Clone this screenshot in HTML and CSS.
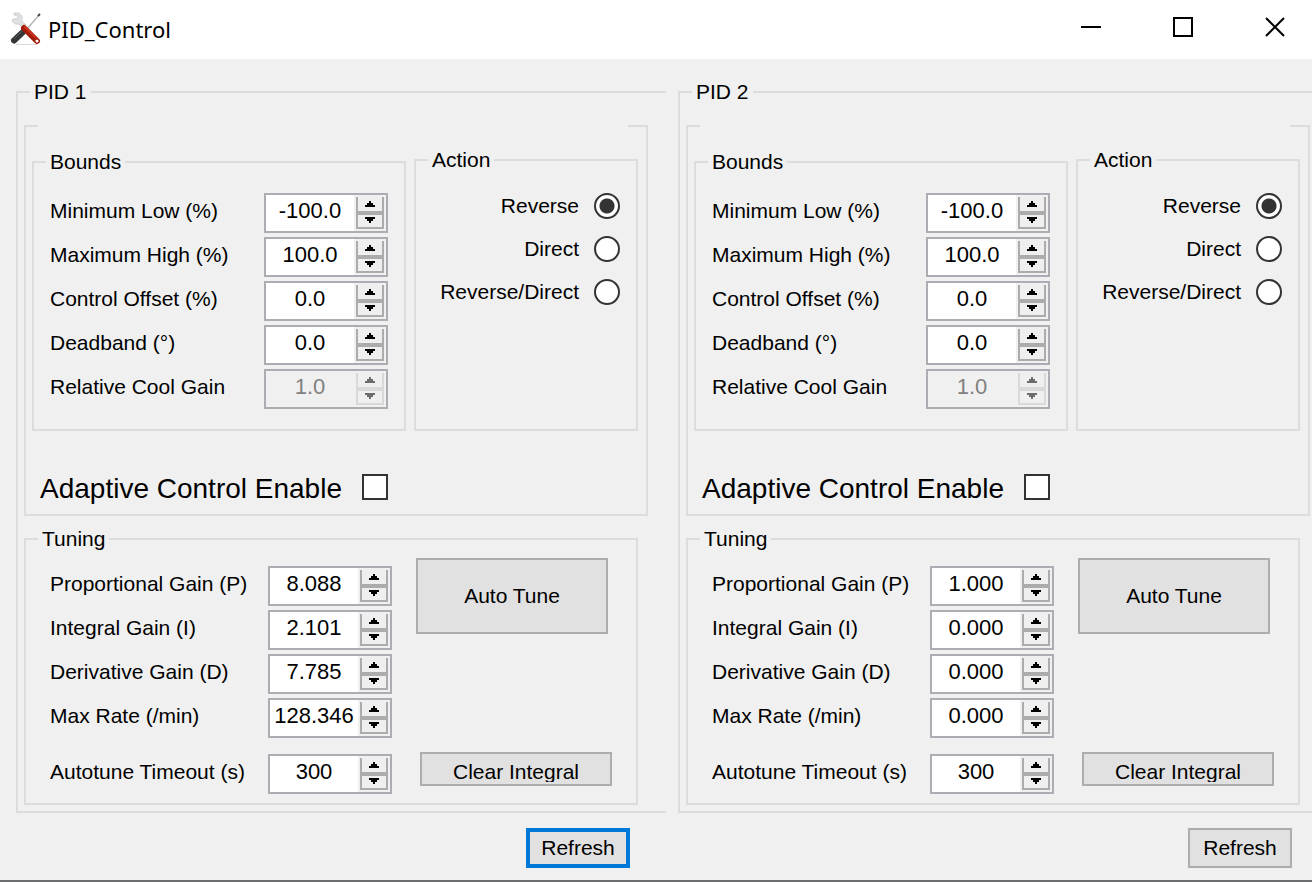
FILE: index.html
```html
<!DOCTYPE html>
<html lang="en">
<head>
<meta charset="utf-8">
<title>PID_Control</title>
<link rel="stylesheet" href="styles.css">
</head>
<body>
<header class="titlebar">
  <svg class="app-icon" viewBox="0 0 32 34" aria-hidden="true">
    <path d="M6 32.500H27" stroke="#d9d9d9" stroke-width="1"/>
    <path d="M29 3L17 17" stroke="#b4b8ba" stroke-width="1.500"/>
    <path d="M30 2L28 4" stroke="#444" stroke-width="2"/>
    <path d="M13.500 19.500L4 28.500" stroke="#34373a" stroke-width="6" stroke-linecap="round"/>
    <path d="M12 19L4 27" stroke="#5a5d60" stroke-width="1"/>
    <path d="M4 1H9L12 4V9L16 13L13 16L9 12L5 12L2 9L3 7L7 7L8 4L4 3Z" fill="#dfe1e2" stroke="#cfd1d2" stroke-width="1"/>
    <path d="M14 16L27 29" stroke="#a31c0a" stroke-width="6" stroke-linecap="round"/>
    <path d="M14 14L26 26" stroke="#c9321a" stroke-width="2"/>
    <circle cx="27" cy="29" r="1.500" fill="#fff"/>
  </svg>
  <h1 class="title">PID_Control</h1>
  <div class="window-controls">
    <button class="window-button" type="button" aria-label="Minimize"><svg viewBox="0 0 20 20"><path d="M0 10H20"/></svg></button>
    <button class="window-button" type="button" aria-label="Maximize"><svg viewBox="0 0 20 20"><path d="M1 1H19V19H1Z"/></svg></button>
    <button class="window-button" type="button" aria-label="Close"><svg viewBox="0 0 20 20"><path d="M1 1L19 19M19 1L1 19"/></svg></button>
  </div>
</header>
<main class="panels" id="panels"></main>
<script src="panels.js"></script>
</body>
</html>
```
FILE: styles.css
```css
* { box-sizing: border-box; }

body {
  margin: 0;
  min-height: 100vh;
  background: #f0f0f0;
  border-bottom: 2px solid #6b6d70;
  color: #000;
  font-family: "Liberation Sans", Arial, sans-serif;
  font-size: 21px;
  line-height: 28px;
  overflow-x: hidden;
}

button, input { font: inherit; color: inherit; margin: 0; }

.titlebar {
  display: flex;
  align-items: center;
  height: 59px;
  padding: 0 1px 2px 10px;
  background: #fff;
}
.app-icon { width: 32px; height: 34px; }
.title {
  margin: 0 0 0 6px;
  font: 400 22px/28px "Noto Sans", "Open Sans", sans-serif;
}
.window-controls {
  display: flex;
  gap: 20px;
  height: 54px;
  margin-left: auto;
  align-self: flex-start;
}
.window-button {
  width: 72px;
  padding: 0;
  border: 0;
  background: none;
}
.window-button svg {
  display: block;
  width: 20px;
  height: 20px;
  margin: 0 auto;
  fill: none;
  stroke: #000;
  stroke-width: 2;
}

.panels {
  display: grid;
  grid-template-columns: minmax(0, 650fr) minmax(0, 634fr);
  gap: 12px;
  padding: 19px 0 12px 16px;
}
.panel { --edge: 18px; }
.panel:last-child { --edge: 2px; }

.group {
  min-width: 0;
  margin: 0;
  padding: 0;
  border: 2px solid #dcdcdc;
}
.group > legend {
  margin-left: 12px;
  padding: 0 4px;
}
.group-panel {
  padding: 0 var(--edge) 6px 6px;
  border-right: 0;
}
.group-panel > legend { margin-left: 6px; }
.group-control {
  margin-top: 19px;
  padding: 0 8px 14px 6px;
}
.group-control > .blank-legend {
  width: calc(100% - 16px);
  height: 2px;
  margin-left: 6px;
}
.control-columns {
  display: flex;
  gap: 8px;
  padding-top: 19px;
}
.group-bounds {
  flex: 1;
  margin-top: 2px;
  padding: 17px 16px 20px;
}
.group-bounds > legend { margin-left: -4px; }
.group-action {
  width: 224px;
  padding-right: 16px;
}
.group-tuning {
  margin: 9px 10px 0 0;
}

.fields {
  display: flex;
  flex-direction: column;
  gap: 4px;
}
.field {
  display: flex;
  justify-content: space-between;
}
.field > label { line-height: 36px; white-space: nowrap; }
.field-timeout { margin-top: 12px; }

.spinner {
  display: flex;
  flex: none;
  width: 124px;
  height: 40px;
  border: 2px solid #abadb3;
  background: #f0f0f0;
}
.spinner-input {
  width: 88px;
  min-width: 0;
  padding: 0 0 4px;
  border: 0;
  outline: 0;
  background: #fff;
  font-size: 22px;
  text-align: center;
}
.spinner-buttons {
  display: flex;
  flex-direction: column;
  width: 32px;
  padding: 2px;
}
.spin {
  display: flex;
  justify-content: center;
  align-items: flex-start;
  height: 16px;
  padding: 4px 0 0;
  border: 2px solid #acacac;
  border-top: 0;
  background: #efefef;
}
.spin-down { padding-top: 2px; border-top: 2px solid #acacac; }
.spin svg { flex: none; width: 10px; height: 6px; }
.spinner-disabled .spinner-input { background: #f0f0f0; color: #808080; }
.spinner-disabled .spin { border-color: #d9d9d9; color: #6d6d6d; }

.options {
  display: flex;
  flex-direction: column;
  align-items: flex-end;
  gap: 17px;
  padding-top: 19px;
}
.option {
  display: flex;
  align-items: center;
  gap: 15px;
  height: 26px;
  white-space: nowrap;
}
.radio, .checkbox {
  appearance: none;
  width: 26px;
  height: 26px;
  border: 2px solid #333;
  background: #fff;
}
.radio { border-radius: 50%; }
.radio:checked { background: radial-gradient(circle, #333 0 7px, #fff 8px); }

.adaptive {
  display: flex;
  align-items: center;
  gap: 20px;
  height: 26px;
  margin-top: 43px;
  padding-left: 8px;
  font-size: 28px;
}
.adaptive > span { padding-top: 4px; }

.tuning-columns {
  display: flex;
  gap: 24px;
  padding-right: 24px;
}
.tuning-columns > .fields {
  flex: 1;
  padding: 13px 0 9px 24px;
}
.tuning-actions {
  display: flex;
  flex-direction: column;
  justify-content: space-between;
  width: 196px;
  padding: 5px 0 17px;
}
.button {
  padding: 0;
  border: 2px solid #adadad;
  background: #e1e1e1;
}
.button-tune { width: 192px; height: 76px; }
.button-clear {
  align-self: flex-end;
  width: 192px;
  height: 34px;
}
.button-clear span {
  display: block;
  height: 26px;
  padding-top: 2px;
  overflow: hidden;
}
.panel-footer {
  display: flex;
  justify-content: flex-end;
  padding: 15px calc(var(--edge) + 18px) 0 0;
}
.button-refresh { width: 104px; height: 40px; }
.button-default { border: 4px solid #0078d7; }
```
FILE: panels.js
```js
const arrowUp = '<svg viewBox="0 0 10 6"><path fill="currentColor" d="M4 0H6V2H8V4H10V6H0V4H2V2H4Z"/></svg>';
const arrowDown = '<svg viewBox="0 0 10 6"><path fill="currentColor" d="M0 0H10V2H8V4H6V6H4V4H2V2H0Z"/></svg>';

function field(panel, key, label, value, options = {}) {
  const id = `pid${panel}-${key}`;
  const disabled = options.disabled ? "disabled" : "";
  return `<div class="field ${options.className || ""}">
    <label for="${id}">${label}</label>
    <div class="spinner ${options.disabled ? "spinner-disabled" : ""}">
      <input class="spinner-input" id="${id}" type="text" value="${value}" ${disabled}>
      <div class="spinner-buttons">
        <button class="spin" type="button" aria-label="Increase" ${disabled}>${arrowUp}</button>
        <button class="spin spin-down" type="button" aria-label="Decrease" ${disabled}>${arrowDown}</button>
      </div>
    </div>
  </div>`;
}

function option(panel, label, checked) {
  return `<label class="option">${label}<input class="radio" type="radio" name="action${panel}" ${checked ? "checked" : ""}></label>`;
}

function panel(n, gains) {
  return `<section class="panel">
    <fieldset class="group group-panel">
      <legend>PID ${n}</legend>
      <fieldset class="group group-control" aria-label="Control">
        <legend class="blank-legend"></legend>
        <div class="control-columns">
          <fieldset class="group group-bounds">
            <legend>Bounds</legend>
            <div class="fields">
              ${field(n, "min", "Minimum Low (%)", "-100.0")}
              ${field(n, "max", "Maximum High (%)", "100.0")}
              ${field(n, "offset", "Control Offset (%)", "0.0")}
              ${field(n, "deadband", "Deadband (°)", "0.0")}
              ${field(n, "cool", "Relative Cool Gain", "1.0", { disabled: true })}
            </div>
          </fieldset>
          <fieldset class="group group-action">
            <legend>Action</legend>
            <div class="options">
              ${option(n, "Reverse", true)}
              ${option(n, "Direct")}
              ${option(n, "Reverse/Direct")}
            </div>
          </fieldset>
        </div>
        <label class="adaptive"><span>Adaptive Control Enable</span><input class="checkbox" type="checkbox"></label>
      </fieldset>
      <fieldset class="group group-tuning">
        <legend>Tuning</legend>
        <div class="tuning-columns">
          <div class="fields">
            ${field(n, "p", "Proportional Gain (P)", gains[0])}
            ${field(n, "i", "Integral Gain (I)", gains[1])}
            ${field(n, "d", "Derivative Gain (D)", gains[2])}
            ${field(n, "rate", "Max Rate (/min)", gains[3])}
            ${field(n, "timeout", "Autotune Timeout (s)", "300", { className: "field-timeout" })}
          </div>
          <div class="tuning-actions">
            <button class="button button-tune" type="button">Auto Tune</button>
            <button class="button button-clear" type="button"><span>Clear Integral</span></button>
          </div>
        </div>
      </fieldset>
    </fieldset>
    <div class="panel-footer">
      <button class="button button-refresh ${n === 1 ? "button-default" : ""}" type="button">Refresh</button>
    </div>
  </section>`;
}

document.getElementById("panels").innerHTML =
  panel(1, ["8.088", "2.101", "7.785", "128.346"]) +
  panel(2, ["1.000", "0.000", "0.000", "0.000"]);
```
